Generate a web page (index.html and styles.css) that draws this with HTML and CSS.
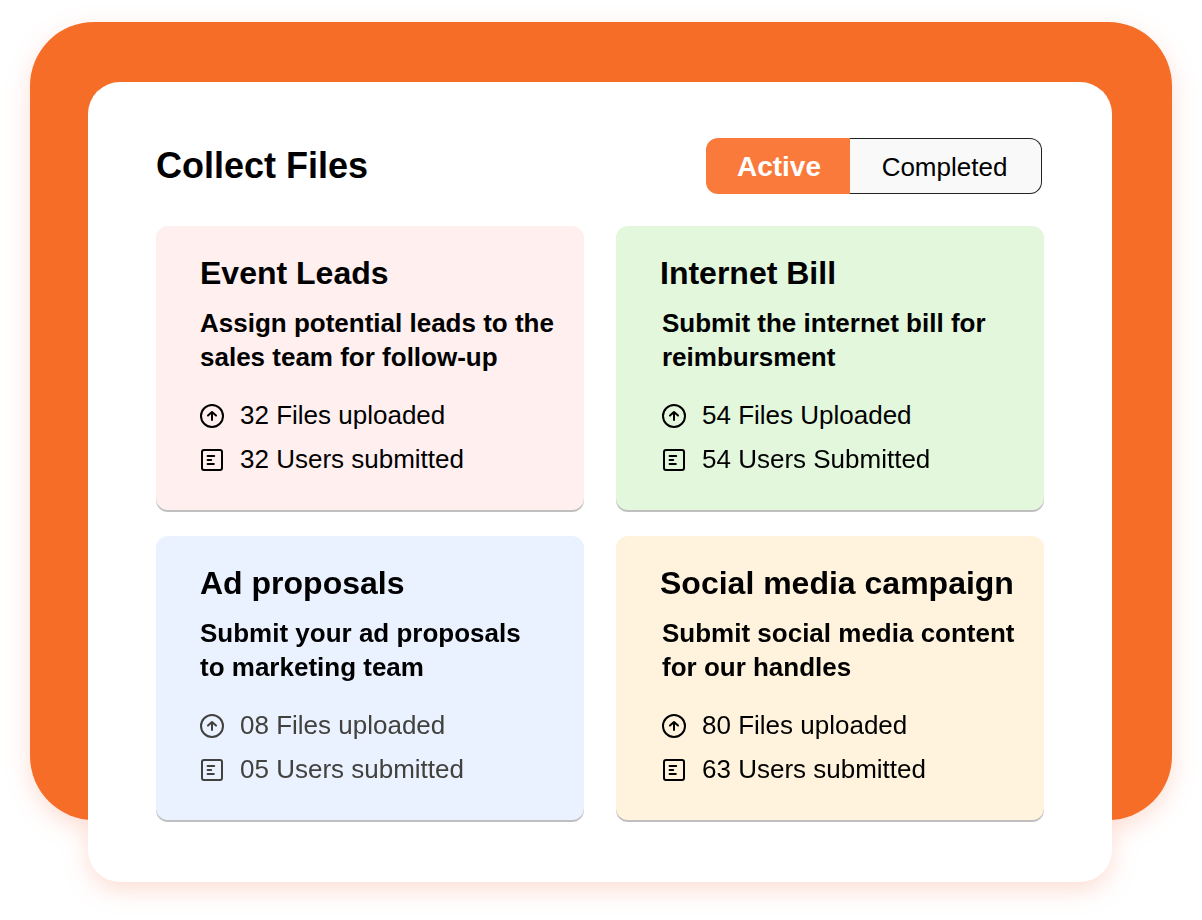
FILE: index.html
```html
<!DOCTYPE html>
<html lang="en">
<head>
<meta charset="utf-8">
<meta name="viewport" content="width=device-width, initial-scale=1">
<title>Collect Files</title>
<link rel="stylesheet" href="styles.css">
</head>
<body>
<svg class="symbols" aria-hidden="true">
  <symbol id="icon-upload" viewBox="0 0 24 24">
    <circle cx="12" cy="12" r="11"/>
    <path d="M12 16V8.4M8 11.6l4-3.6 4 3.6"/>
  </symbol>
  <symbol id="icon-form" viewBox="0 0 24 24">
    <rect x="2" y="2" width="20" height="20" rx="2"/>
    <path d="M7.6 8h6.6M7.6 12h3.6M7.6 16h6.2"/>
  </symbol>
</svg>
<div class="frame">
  <main class="panel">
    <header class="panel-header">
      <h1 class="panel-title">Collect Files</h1>
      <div class="tabs">
        <button class="tab tab-active" type="button" aria-pressed="true">Active</button>
        <button class="tab" type="button" aria-pressed="false">Completed</button>
      </div>
    </header>
    <div class="cards">
      <article class="card card-pink">
        <h2 class="card-title">Event Leads</h2>
        <div class="card-body">
          <p class="card-text">Assign potential leads to the<br>sales team for follow-up</p>
          <ul class="stats">
            <li class="stat"><svg class="icon"><use href="#icon-upload"/></svg>32 Files uploaded</li>
            <li class="stat"><svg class="icon"><use href="#icon-form"/></svg>32 Users submitted</li>
          </ul>
        </div>
      </article>
      <article class="card card-green">
        <h2 class="card-title">Internet Bill</h2>
        <div class="card-body card-body-inset">
          <p class="card-text">Submit the internet bill for<br>reimbursment</p>
          <ul class="stats">
            <li class="stat"><svg class="icon"><use href="#icon-upload"/></svg>54 Files Uploaded</li>
            <li class="stat"><svg class="icon"><use href="#icon-form"/></svg>54 Users Submitted</li>
          </ul>
        </div>
      </article>
      <article class="card card-blue">
        <h2 class="card-title">Ad proposals</h2>
        <div class="card-body">
          <p class="card-text">Submit your ad proposals<br>to marketing team</p>
          <ul class="stats stats-muted">
            <li class="stat"><svg class="icon"><use href="#icon-upload"/></svg>08 Files uploaded</li>
            <li class="stat"><svg class="icon"><use href="#icon-form"/></svg>05 Users submitted</li>
          </ul>
        </div>
      </article>
      <article class="card card-yellow">
        <h2 class="card-title">Social media campaign</h2>
        <div class="card-body card-body-inset">
          <p class="card-text">Submit social media content<br>for our handles</p>
          <ul class="stats">
            <li class="stat"><svg class="icon"><use href="#icon-upload"/></svg>80 Files uploaded</li>
            <li class="stat"><svg class="icon"><use href="#icon-form"/></svg>63 Users submitted</li>
          </ul>
        </div>
      </article>
    </div>
  </main>
</div>
</body>
</html>
```
FILE: styles.css
```css
* {
  box-sizing: border-box;
}

body {
  margin: 0;
  padding: 22px 30px 100px;
  background: #fff;
  color: #000;
  font-family: "Liberation Sans", Arial, sans-serif;
  font-size: 26px;
}

.symbols {
  display: none;
}

/* One shadow follows the joined outline of frame and panel. */
.frame {
  display: flex;
  padding: 60px 60px 0 58px;
  border-radius: 64px;
  background: #f66d28;
  filter: drop-shadow(0 8px 12px rgba(246, 90, 40, 0.2));
}

/* The panel hangs below the coloured frame. */
.panel {
  flex: 1;
  min-width: 0;
  margin-bottom: -62px;
  padding: 56px 68px 62px;
  border-radius: 32px;
  background: #fff;
}

.panel-header {
  display: flex;
  align-items: center;
  justify-content: space-between;
  margin-bottom: 32px;
  padding-right: 2px;
}

.panel-title {
  margin: 0;
  font-size: 36px;
  line-height: 56px;
}

.tabs {
  display: flex;
  height: 56px;
}

.tab {
  width: 192px;
  padding: 2px 2px 0 0;
  border: 1px solid #222;
  border-left: 0;
  border-radius: 0 12px 12px 0;
  background: #f9f9f9;
  color: #000;
  font: inherit;
}

.tab-active {
  width: 144px;
  padding: 2px 0 0 2px;
  border: 0;
  border-radius: 12px 0 0 12px;
  background: #fa7a3b;
  color: #fff;
  font-size: 28px;
  font-weight: bold;
}

.cards {
  display: grid;
  grid-template-columns: 1fr 1fr;
  gap: 26px 32px;
}

.card {
  padding: 28px 16px 29px 44px;
  border-radius: 12px;
  box-shadow: 0 2px 0 #bfbfbf;
}

.card-pink {
  background: #fff0ef;
}

.card-green {
  background: #e2f7dc;
}

.card-blue {
  background: #eaf1ff;
}

.card-yellow {
  background: #fff3de;
}

.card-title {
  margin: 0 0 14px;
  font-size: 32px;
  line-height: 38px;
  white-space: nowrap;
}

.card-body-inset {
  padding-left: 2px;
}

.card-text {
  margin: 0 0 19px;
  font-weight: bold;
  line-height: 34px;
}

.stats {
  margin: 0;
  padding: 0;
  list-style: none;
}

.stats-muted {
  color: #41413e;
}

.stat {
  display: flex;
  align-items: center;
  gap: 16px;
  line-height: 44px;
}

.icon {
  flex: none;
  width: 24px;
  height: 24px;
  margin-top: 2px;
  fill: none;
  stroke: currentColor;
  stroke-width: 2;
  stroke-linecap: round;
  stroke-linejoin: round;
}
```
